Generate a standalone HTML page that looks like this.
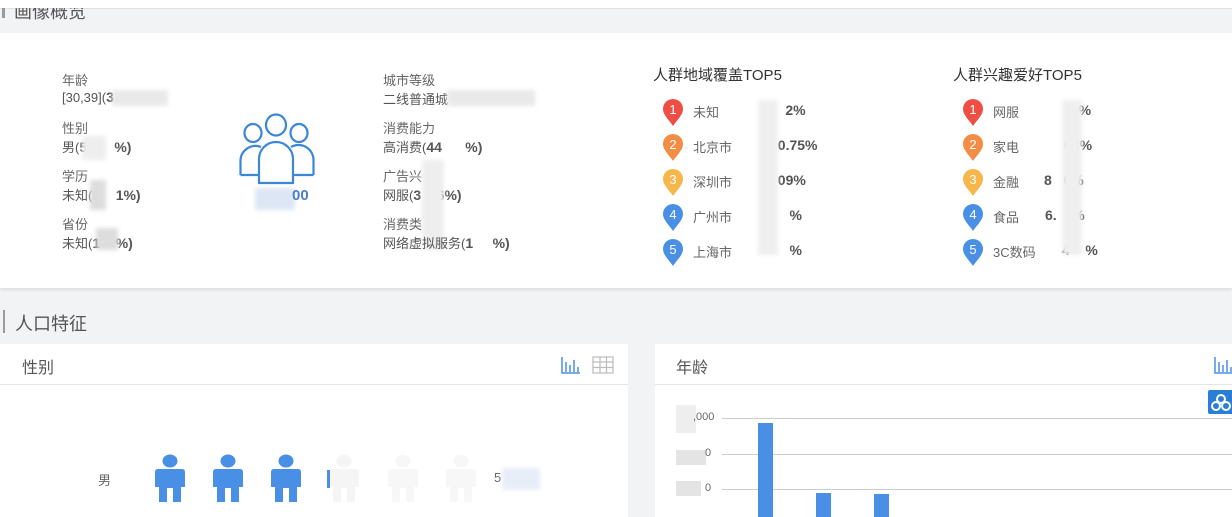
<!DOCTYPE html>
<html><head><meta charset="utf-8"><style>
*{margin:0;padding:0;box-sizing:border-box}
body{width:1232px;height:517px;overflow:hidden;background:#f2f3f5;font-family:"Liberation Sans","Noto Sans CJK SC",sans-serif;color:#555;position:relative}
.a{position:absolute;white-space:nowrap}
.lab{font-size:13px;color:#666}
.val{font-size:13px;color:#555}
.val b{font-weight:bold;color:#555;font-size:14px}
.blur{position:absolute;background:#e4e4e4;filter:blur(2px)}
.pin{position:absolute;width:20px;height:27px}
.pt{font-size:13px;color:#666}
.pc{font-size:14px;font-weight:bold;color:#555}
.card{position:absolute;background:#fff}
</style></head><body>
<div class="a" style="left:0;top:0;width:1232px;height:9px;background:#fff;border-bottom:1px solid #e0e0e0"></div>
<div class="a" style="left:2px;top:8px;width:3px;height:10px;background:#999"></div>
<div class="a" style="left:14px;top:-2px;font-size:18px;color:#555;clip-path:inset(10px 0 0 0)">画像概览</div>
<div class="card" style="left:0;top:33px;width:1232px;height:255px;box-shadow:0 2px 3px #ddd"></div>

<div class="a lab" style="left:62px;top:70px">年龄</div>
<div class="a val" style="left:62px;top:89px">[30,39](<b>3</b></div>
<div class="blur" style="left:112px;top:90px;width:56px;height:16px;background:#e9e9e9"></div>
<div class="a lab" style="left:62px;top:118px">性别</div>
<div class="a val" style="left:62px;top:137px">男(<b>5&nbsp;&nbsp;&nbsp;&nbsp;&nbsp;&nbsp;&nbsp;%)</b></div>
<div class="blur" style="left:82px;top:136px;width:24px;height:24px;background:#eee"></div>
<div class="a lab" style="left:62px;top:166px">学历</div>
<div class="a val" style="left:62px;top:185px">未知(<b>5&nbsp;&nbsp;&nbsp;&nbsp;1%)</b></div>
<div class="blur" style="left:90px;top:180px;width:16px;height:30px;background:#ddd"></div>
<div class="a lab" style="left:62px;top:214px">省份</div>
<div class="a val" style="left:62px;top:233px">未知(<b>1&nbsp;&nbsp;&nbsp;&nbsp;%)</b></div>
<div class="blur" style="left:96px;top:228px;width:22px;height:22px;background:#ddd"></div>

<svg class="a" style="left:238px;top:113px" width="78" height="72" viewBox="0 0 78 72" fill="none" stroke="#3a86d8" stroke-width="2.2">
<ellipse cx="38" cy="12" rx="10" ry="10.5"/><ellipse cx="15" cy="20" rx="8.5" ry="9"/><ellipse cx="61" cy="20" rx="8.5" ry="9"/>
<path d="M2.5 62 V47 A15 15 0 0 1 23 34"/><path d="M75.5 62 V47 A15 15 0 0 0 53 34"/>
<path d="M21 70 V46 A17 17 0 0 1 55 46 V70 Z"/><path d="M2.5 62 H21 M55 62 H75.5"/>
</svg>
<div class="blur" style="left:255px;top:188px;width:40px;height:22px;background:#dde6f4"></div>
<div class="a" style="left:292px;top:187px;font-size:15px;font-weight:bold;color:#4a7fc8">00</div>

<div class="a lab" style="left:383px;top:70px">城市等级</div>
<div class="a val" style="left:383px;top:89px">二线普通城</div>
<div class="blur" style="left:447px;top:90px;width:88px;height:16px;background:#e9e9e9"></div>
<div class="a lab" style="left:383px;top:118px">消费能力</div>
<div class="a val" style="left:383px;top:137px">高消费(<b>44&nbsp;&nbsp;&nbsp;&nbsp;&nbsp;&nbsp;%)</b></div>
<div class="a lab" style="left:383px;top:166px">广告兴</div>
<div class="a val" style="left:383px;top:185px">网服(<b>3&nbsp;&nbsp;&nbsp;&nbsp;6%)</b></div>
<div class="blur" style="left:422px;top:160px;width:22px;height:90px;background:#eee"></div>
<div class="a lab" style="left:383px;top:214px">消费类</div>
<div class="a val" style="left:383px;top:233px">网络虚拟服务(<b>1&nbsp;&nbsp;&nbsp;&nbsp;&nbsp;%)</b></div>

<div class="a" style="left:653px;top:64px;font-size:15px;color:#333">人群地域覆盖TOP5</div>
<div class="a" style="left:953px;top:64px;font-size:15px;color:#333">人群兴趣爱好TOP5</div>

<svg width="0" height="0" style="position:absolute"><defs><path id="p" d="M10 0 A10 10 0 0 1 20 10 C20 16 14 21 10 27 C6 21 0 16 0 10 A10 10 0 0 1 10 0Z"/>
<g id="m"><ellipse cx="18" cy="7" rx="7.5" ry="6.5"/><path d="M3 18 Q3 15 6 15 H30 Q33 15 33 18 V33 H29 V48 H21 V34 H15 V48 H7 V33 H3Z"/></g></defs></svg>

<div class="pin" style="left:663px;top:99px"><svg width="20" height="27"><use href="#p" fill="#ee4e44"/><text x="10" y="15" fill="#fff" font-size="13" text-anchor="middle" font-family="Liberation Sans">1</text></svg></div>
<div class="a pt" style="left:693px;top:102px">未知</div><div class="a pc" style="left:762px;top:102px">&nbsp;&nbsp;&nbsp;&nbsp;&nbsp;&nbsp;2%</div>
<div class="pin" style="left:663px;top:134px"><svg width="20" height="27"><use href="#p" fill="#f38c44"/><text x="10" y="15" fill="#fff" font-size="13" text-anchor="middle" font-family="Liberation Sans">2</text></svg></div>
<div class="a pt" style="left:693px;top:137px">北京市</div><div class="a pc" style="left:770px;top:137px">&nbsp;&nbsp;0.75%</div>
<div class="pin" style="left:663px;top:169px"><svg width="20" height="27"><use href="#p" fill="#f6b64a"/><text x="10" y="15" fill="#fff" font-size="13" text-anchor="middle" font-family="Liberation Sans">3</text></svg></div>
<div class="a pt" style="left:693px;top:172px">深圳市</div><div class="a pc" style="left:770px;top:172px">&nbsp;&nbsp;09%</div>
<div class="pin" style="left:663px;top:204px"><svg width="20" height="27"><use href="#p" fill="#4a8fe6"/><text x="10" y="15" fill="#fff" font-size="13" text-anchor="middle" font-family="Liberation Sans">4</text></svg></div>
<div class="a pt" style="left:693px;top:207px">广州市</div><div class="a pc" style="left:770px;top:207px">&nbsp;&nbsp;&nbsp;&nbsp;&nbsp;%</div>
<div class="pin" style="left:663px;top:239px"><svg width="20" height="27"><use href="#p" fill="#4a8fe6"/><text x="10" y="15" fill="#fff" font-size="13" text-anchor="middle" font-family="Liberation Sans">5</text></svg></div>
<div class="a pt" style="left:693px;top:242px">上海市</div><div class="a pc" style="left:770px;top:242px">&nbsp;&nbsp;&nbsp;&nbsp;&nbsp;%</div>
<div class="blur" style="left:758px;top:100px;width:20px;height:155px;background:#efefef"></div>

<div class="pin" style="left:963px;top:99px"><svg width="20" height="27"><use href="#p" fill="#ee4e44"/><text x="10" y="15" fill="#fff" font-size="13" text-anchor="middle" font-family="Liberation Sans">1</text></svg></div>
<div class="a pt" style="left:993px;top:102px">网服</div><div class="a pc" style="left:1067px;top:102px">.3%</div>
<div class="pin" style="left:963px;top:134px"><svg width="20" height="27"><use href="#p" fill="#f38c44"/><text x="10" y="15" fill="#fff" font-size="13" text-anchor="middle" font-family="Liberation Sans">2</text></svg></div>
<div class="a pt" style="left:993px;top:137px">家电</div><div class="a pc" style="left:1064px;top:137px">68%</div>
<div class="pin" style="left:963px;top:169px"><svg width="20" height="27"><use href="#p" fill="#f6b64a"/><text x="10" y="15" fill="#fff" font-size="13" text-anchor="middle" font-family="Liberation Sans">3</text></svg></div>
<div class="a pt" style="left:993px;top:172px">金融</div><div class="a pc" style="left:1044px;top:172px">8&nbsp;&nbsp;&nbsp;0%</div>
<div class="pin" style="left:963px;top:204px"><svg width="20" height="27"><use href="#p" fill="#4a8fe6"/><text x="10" y="15" fill="#fff" font-size="13" text-anchor="middle" font-family="Liberation Sans">4</text></svg></div>
<div class="a pt" style="left:993px;top:207px">食品</div><div class="a pc" style="left:1045px;top:207px">6.&nbsp;&nbsp;&nbsp;&nbsp;%</div>
<div class="pin" style="left:963px;top:239px"><svg width="20" height="27"><use href="#p" fill="#4a8fe6"/><text x="10" y="15" fill="#fff" font-size="13" text-anchor="middle" font-family="Liberation Sans">5</text></svg></div>
<div class="a pt" style="left:993px;top:242px">3C数码</div><div class="a pc" style="left:1062px;top:242px">4&nbsp;&nbsp;&nbsp;&nbsp;%</div>
<div class="blur" style="left:1062px;top:100px;width:20px;height:155px;background:#efefef"></div>

<div class="a" style="left:3px;top:310px;width:2px;height:23px;background:#999"></div>
<div class="a" style="left:15px;top:310px;font-size:18px;color:#555">人口特征</div>

<div class="card" style="left:0;top:344px;width:628px;height:173px"></div>
<div class="a" style="left:0;top:384px;width:628px;height:1px;background:#e5e5e5"></div>
<div class="a" style="left:22px;top:354px;font-size:16px;color:#555">性别</div>
<svg class="a" style="left:561px;top:356px" width="20" height="18" stroke="#4a8fe6" stroke-width="1.5" fill="none"><path d="M1 1V17H19M5 6V16M9 9V16M13 4V16M17 11V16"/></svg>
<svg class="a" style="left:592px;top:356px" width="22" height="18" stroke="#bbb" stroke-width="1.2" fill="none"><rect x="1" y="1" width="20" height="16"/><path d="M1 6H21M1 11.5H21M8 1V17M14.5 1V17"/></svg>
<div class="a" style="left:98px;top:470px;font-size:13px;color:#666">男</div>
<svg class="a" style="left:152px;top:454px" width="340" height="50">
<use href="#m" fill="#4a8fe6"/><use href="#m" x="58" fill="#4a8fe6"/><use href="#m" x="116" fill="#4a8fe6"/>
<use href="#m" x="174" fill="#f5f5f5"/><use href="#m" x="233" fill="#f7f7f7"/><use href="#m" x="291" fill="#f7f7f7"/>
<rect x="175" y="16" width="3" height="18" fill="#4a8fe6"/></svg>
<div class="a" style="left:494px;top:470px;font-size:13px;color:#666">5</div>
<div class="blur" style="left:502px;top:468px;width:38px;height:22px;background:#e8eef8"></div>

<div class="card" style="left:655px;top:344px;width:577px;height:173px"></div>
<div class="a" style="left:655px;top:384px;width:577px;height:1px;background:#e5e5e5"></div>
<div class="a" style="left:676px;top:354px;font-size:16px;color:#555">年龄</div>
<svg class="a" style="left:1214px;top:356px" width="20" height="18" stroke="#4a8fe6" stroke-width="1.5" fill="none"><path d="M1 1V17H19M5 6V16M9 9V16M13 4V16M17 11V16"/></svg>
<div class="a" style="left:1208px;top:390px;width:26px;height:24px;background:#2a7fd4;border-radius:2px"></div>
<svg class="a" style="left:1211px;top:393px" width="20" height="18" stroke="#fff" stroke-width="2" fill="none"><circle cx="10" cy="6" r="4"/><circle cx="5" cy="13" r="4"/><circle cx="15" cy="13" r="4"/></svg>
<div class="a" style="left:722px;top:418px;width:510px;height:1px;background:#ccc"></div>
<div class="a" style="left:722px;top:454px;width:510px;height:1px;background:#ccc"></div>
<div class="a" style="left:722px;top:489px;width:510px;height:1px;background:#ccc"></div>
<div class="a" style="left:676px;top:405px;width:20px;height:28px;background:#eee"></div>
<div class="a" style="left:676px;top:450px;width:30px;height:15px;background:#e4e4e4"></div>
<div class="a" style="left:676px;top:481px;width:25px;height:15px;background:#e4e4e4"></div>
<div class="a" style="left:693px;top:411px;font-size:11px;color:#666">,000</div>
<div class="a" style="left:705px;top:447px;font-size:11px;color:#666">0</div>
<div class="a" style="left:705px;top:482px;font-size:11px;color:#666">0</div>
<div class="a" style="left:758px;top:423px;width:15px;height:94px;background:#4a8fe6"></div>
<div class="a" style="left:816px;top:493px;width:15px;height:24px;background:#4a8fe6"></div>
<div class="a" style="left:874px;top:494px;width:15px;height:23px;background:#4a8fe6"></div>
</body></html>
